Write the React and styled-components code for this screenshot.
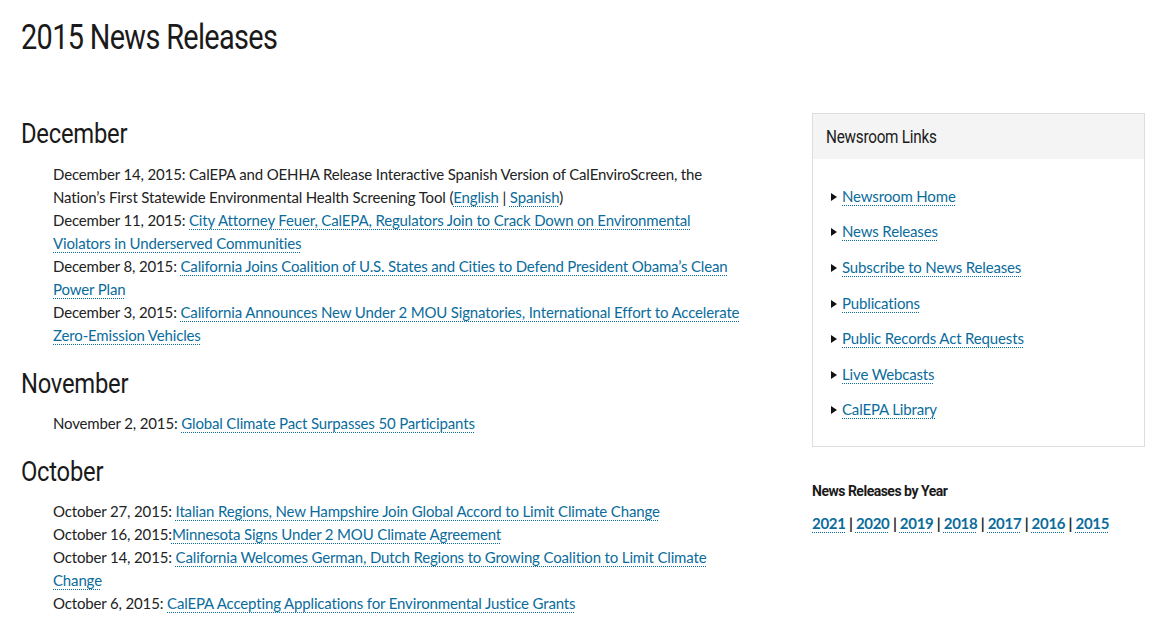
import React from 'react';
import styled, { createGlobalStyle } from 'styled-components';

const GlobalStyle = createGlobalStyle`
  body {
    margin: 0;
    background: #fff;
    color: #222;
    font-family: Lato, "Noto Sans", sans-serif;
  }
`;

const headFont = `Roboto, "Noto Sans", sans-serif`;

const Page = styled.div`
  padding: 0 20px 0 21px;
`;

const Title = styled.h1`
  margin: 0;
  padding-top: 18px;
  height: 75px;
  font-family: ${headFont};
  font-weight: 400;
  font-size: 35px;
  letter-spacing: -0.8px;
  line-height: 40px;
  color: #1a1a1a;
  transform: scaleX(0.825);
  transform-origin: left center;
`;

const Columns = styled.div`
  display: flex;
  align-items: flex-start;
  justify-content: space-between;
`;

const Main = styled.div`
  width: 730px;
`;

const Month = styled.h2`
  margin: 0;
  font-family: ${headFont};
  font-weight: 400;
  font-size: 28px;
  letter-spacing: -0.3px;
  line-height: 34px;
  padding: ${p => p.$first ? '24px 0 12px' : '20px 0 11px'};
  color: #1a1a1a;
  transform: scaleX(0.85);
  transform-origin: left center;
`;

const Items = styled.div`
  padding-left: 32px;
  font-size: 15px;
  letter-spacing: -0.15px;
  line-height: 23px;
`;

const Item = styled.p`
  margin: 0;
`;

const Link = styled.a`
  color: #0a6c9c;
  text-decoration: underline dotted;
  text-underline-offset: 3px;
  text-decoration-thickness: 1px;
  font-weight: ${p => p.$bold ? 700 : 400};
`;

const Aside = styled.div`
  width: 333px;
  margin-top: 20px;
`;

const Panel = styled.div`
  border: 1px solid #ddd;
`;

const PanelHead = styled.div`
  background: #f4f4f4;
  height: 45px;
  padding: 0 13px;
  display: flex;
  align-items: center;
`;

const PanelTitle = styled.span`
  font-family: ${headFont};
  font-size: 18px;
  letter-spacing: -0.3px;
  color: #1a1a1a;
  transform: scaleX(0.85);
  transform-origin: left center;
`;

const LinkList = styled.ul`
  list-style: none;
  margin: 0;
  padding: 19px 0 19px 18px;
`;

const LinkItem = styled.li`
  display: flex;
  align-items: center;
  gap: 5px;
  height: 35.6px;
  font-size: 15px;
  letter-spacing: -0.15px;
`;

const Arrow = styled.span`
  width: 0;
  height: 0;
  border-top: 4px solid transparent;
  border-bottom: 4px solid transparent;
  border-left: 6px solid #111;
  margin-top: 2px;
`;

const YearBlock = styled.div`
  margin-top: 34px;
`;

const YearTitle = styled.div`
  font-weight: 700;
  font-size: 14px;
  letter-spacing: -0.5px;
  line-height: 20px;
  font-family: ${headFont};
  color: #1a1a1a;
`;

const Years = styled.div`
  margin-top: 12px;
  font-size: 15px;
  letter-spacing: -0.3px;
  font-weight: 700;
  line-height: 20px;
`;

const months = [
  {
    name: 'December',
    items: [
      { date: 'December 14, 2015: ', custom: true },
      { date: 'December 11, 2015: ', title: 'City Attorney Feuer, CalEPA, Regulators Join to Crack Down on Environmental Violators in Underserved Communities' },
      { date: 'December 8, 2015: ', title: 'California Joins Coalition of U.S. States and Cities to Defend President Obama’s Clean Power Plan' },
      { date: 'December 3, 2015: ', title: 'California Announces New Under 2 MOU Signatories, International Effort to Accelerate Zero-Emission Vehicles' },
    ],
  },
  {
    name: 'November',
    items: [
      { date: 'November 2, 2015: ', title: 'Global Climate Pact Surpasses 50 Participants' },
    ],
  },
  {
    name: 'October',
    items: [
      { date: 'October 27, 2015: ', title: 'Italian Regions, New Hampshire Join Global Accord to Limit Climate Change' },
      { date: 'October 16, 2015:', title: 'Minnesota Signs Under 2 MOU Climate Agreement' },
      { date: 'October 14, 2015: ', title: 'California Welcomes German, Dutch Regions to Growing Coalition to Limit Climate Change' },
      { date: 'October 6, 2015: ', title: 'CalEPA Accepting Applications for Environmental Justice Grants' },
    ],
  },
];

const newsroomLinks = [
  'Newsroom Home',
  'News Releases',
  'Subscribe to News Releases',
  'Publications',
  'Public Records Act Requests',
  'Live Webcasts',
  'CalEPA Library',
];

const years = ['2021', '2020', '2019', '2018', '2017', '2016', '2015'];

export default function App() {
  return (
    <>
      <GlobalStyle />
      <Page>
        <Title>2015 News Releases</Title>
        <Columns>
          <Main>
            {months.map((m, i) => (
              <div key={m.name}>
                <Month $first={i === 0}>{m.name}</Month>
                <Items>
                  {m.items.map((it, j) => (
                    <Item key={j}>
                      {it.date}
                      {it.custom ? (
                        <>
                          CalEPA and OEHHA Release Interactive Spanish Version of CalEnviroScreen, the Nation’s First Statewide Environmental Health Screening Tool (
                          <Link href="#">English</Link> | <Link href="#">Spanish</Link>)
                        </>
                      ) : (
                        <Link href="#">{it.title}</Link>
                      )}
                    </Item>
                  ))}
                </Items>
              </div>
            ))}
          </Main>
          <Aside>
            <Panel>
              <PanelHead>
                <PanelTitle>Newsroom Links</PanelTitle>
              </PanelHead>
              <LinkList>
                {newsroomLinks.map(l => (
                  <LinkItem key={l}>
                    <Arrow />
                    <Link href="#">{l}</Link>
                  </LinkItem>
                ))}
              </LinkList>
            </Panel>
            <YearBlock>
              <YearTitle>News Releases by Year</YearTitle>
              <Years>
                {years.map((y, i) => (
                  <React.Fragment key={y}>
                    <Link href="#" $bold>{y}</Link>
                    {i < years.length - 1 ? ' | ' : ''}
                  </React.Fragment>
                ))}
              </Years>
            </YearBlock>
          </Aside>
        </Columns>
      </Page>
    </>
  );
}
